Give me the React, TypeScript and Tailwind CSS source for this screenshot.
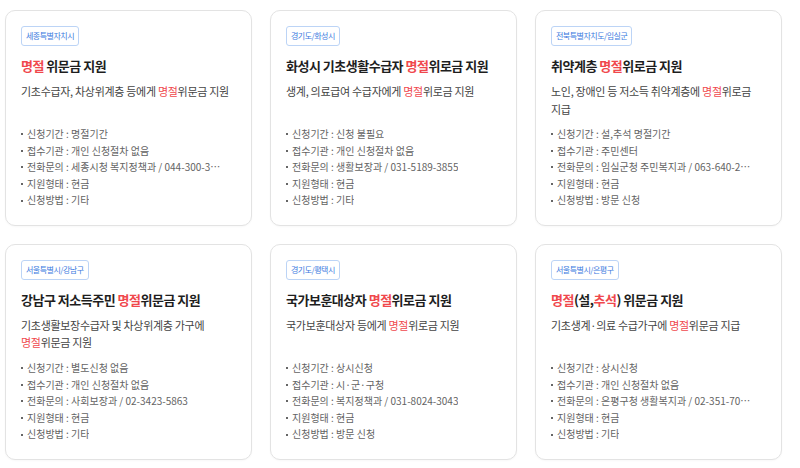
import React from 'react';

type Seg = { t: string; red?: boolean };

type Item = {
  region: string;
  title: Seg[];
  desc: Seg[];
  rows: [string, string][];
};

const items: Item[] = [
  {
    region: '세종특별자치시',
    title: [{ t: '명절', red: true }, { t: ' 위문금 지원' }],
    desc: [{ t: '기초수급자, 차상위계층 등에게 ' }, { t: '명절', red: true }, { t: '위문금 지원' }],
    rows: [
      ['신청기간', '명절기간'],
      ['접수기관', '개인 신청절차 없음'],
      ['전화문의', '세종시청 복지정책과 / 044-300-3000'],
      ['지원형태', '현금'],
      ['신청방법', '기타'],
    ],
  },
  {
    region: '경기도/화성시',
    title: [{ t: '화성시 기초생활수급자 ' }, { t: '명절', red: true }, { t: '위로금 지원' }],
    desc: [{ t: '생계, 의료급여 수급자에게 ' }, { t: '명절', red: true }, { t: '위로금 지원' }],
    rows: [
      ['신청기간', '신청 불필요'],
      ['접수기관', '개인 신청절차 없음'],
      ['전화문의', '생활보장과 / 031-5189-3855'],
      ['지원형태', '현금'],
      ['신청방법', '기타'],
    ],
  },
  {
    region: '전북특별자치도/임실군',
    title: [{ t: '취약계층 ' }, { t: '명절', red: true }, { t: '위로금 지원' }],
    desc: [{ t: '노인, 장애인 등 저소득 취약계층에 ' }, { t: '명절', red: true }, { t: '위로금 지급' }],
    rows: [
      ['신청기간', '설,추석 명절기간'],
      ['접수기관', '주민센터'],
      ['전화문의', '임실군청 주민복지과 / 063-640-2000'],
      ['지원형태', '현금'],
      ['신청방법', '방문 신청'],
    ],
  },
  {
    region: '서울특별시/강남구',
    title: [{ t: '강남구 저소득주민 ' }, { t: '명절', red: true }, { t: '위문금 지원' }],
    desc: [{ t: '기초생활보장수급자 및 차상위계층 가구에 ' }, { t: '명절', red: true }, { t: '위문금 지원' }],
    rows: [
      ['신청기간', '별도신청 없음'],
      ['접수기관', '개인 신청절차 없음'],
      ['전화문의', '사회보장과 / 02-3423-5863'],
      ['지원형태', '현금'],
      ['신청방법', '기타'],
    ],
  },
  {
    region: '경기도/평택시',
    title: [{ t: '국가보훈대상자 ' }, { t: '명절', red: true }, { t: '위로금 지원' }],
    desc: [{ t: '국가보훈대상자 등에게 ' }, { t: '명절', red: true }, { t: '위로금 지원' }],
    rows: [
      ['신청기간', '상시신청'],
      ['접수기관', '시·군·구청'],
      ['전화문의', '복지정책과 / 031-8024-3043'],
      ['지원형태', '현금'],
      ['신청방법', '방문 신청'],
    ],
  },
  {
    region: '서울특별시/은평구',
    title: [
      { t: '명절', red: true },
      { t: '(설,' },
      { t: '추석', red: true },
      { t: ') 위문금 지원' },
    ],
    desc: [{ t: '기초생계·의료 수급가구에 ' }, { t: '명절', red: true }, { t: '위문금 지급' }],
    rows: [
      ['신청기간', '상시신청'],
      ['접수기관', '개인 신청절차 없음'],
      ['전화문의', '은평구청 생활복지과 / 02-351-7083, 7084'],
      ['지원형태', '현금'],
      ['신청방법', '기타'],
    ],
  },
];

const Text = ({ segs }: { segs: Seg[] }) => (
  <>
    {segs.map((s, i) => (
      <span key={i} className={s.red ? 'text-[#f0484d]' : undefined}>
        {s.t}
      </span>
    ))}
  </>
);

const Card = ({ item }: { item: Item }) => (
  <div className="rounded-[10px] border border-[#e3e3e3] bg-white px-[15px] pt-[15px] pb-[16px] shadow-[0_1px_2px_rgba(0,0,0,0.03)]">
    <div className="flex">
      <span className="rounded-[3px] border border-[#bcd4f6] px-[4px] text-[8px] leading-[18px] tracking-[-0.5px] text-[#3d7be0]">
        {item.region}
      </span>
    </div>
    <h3 className="mt-[10px] truncate text-[13px] font-bold leading-[20px] tracking-[-0.5px] text-[#1e1e1e]">
      <Text segs={item.title} />
    </h3>
    <p className="mt-[7px] h-[35px] break-keep text-[11px] leading-[17.5px] tracking-[-0.3px] text-[#444]">
      <Text segs={item.desc} />
    </p>
    <ul className="mt-[8px] pr-[14px]">
      {item.rows.map(([k, v]) => (
        <li key={k} className="flex items-center gap-[4px] text-[10px] leading-[16.6px] text-[#636363]">
          <span className="h-[2px] w-[2px] shrink-0 bg-[#666]" />
          <span className="min-w-0 truncate">
            {k} : {v}
          </span>
        </li>
      ))}
    </ul>
  </div>
);

const App: React.FC = () => {
  return (
    <div className="min-h-screen bg-white pl-[5px] pt-[10px] font-['Noto_Sans_CJK_KR',sans-serif]">
      <div className="grid w-[777px] grid-cols-3 gap-x-[18px] gap-y-[18px]">
        {items.map((it) => (
          <Card key={it.region} item={it} />
        ))}
      </div>
    </div>
  );
};

export default App;
